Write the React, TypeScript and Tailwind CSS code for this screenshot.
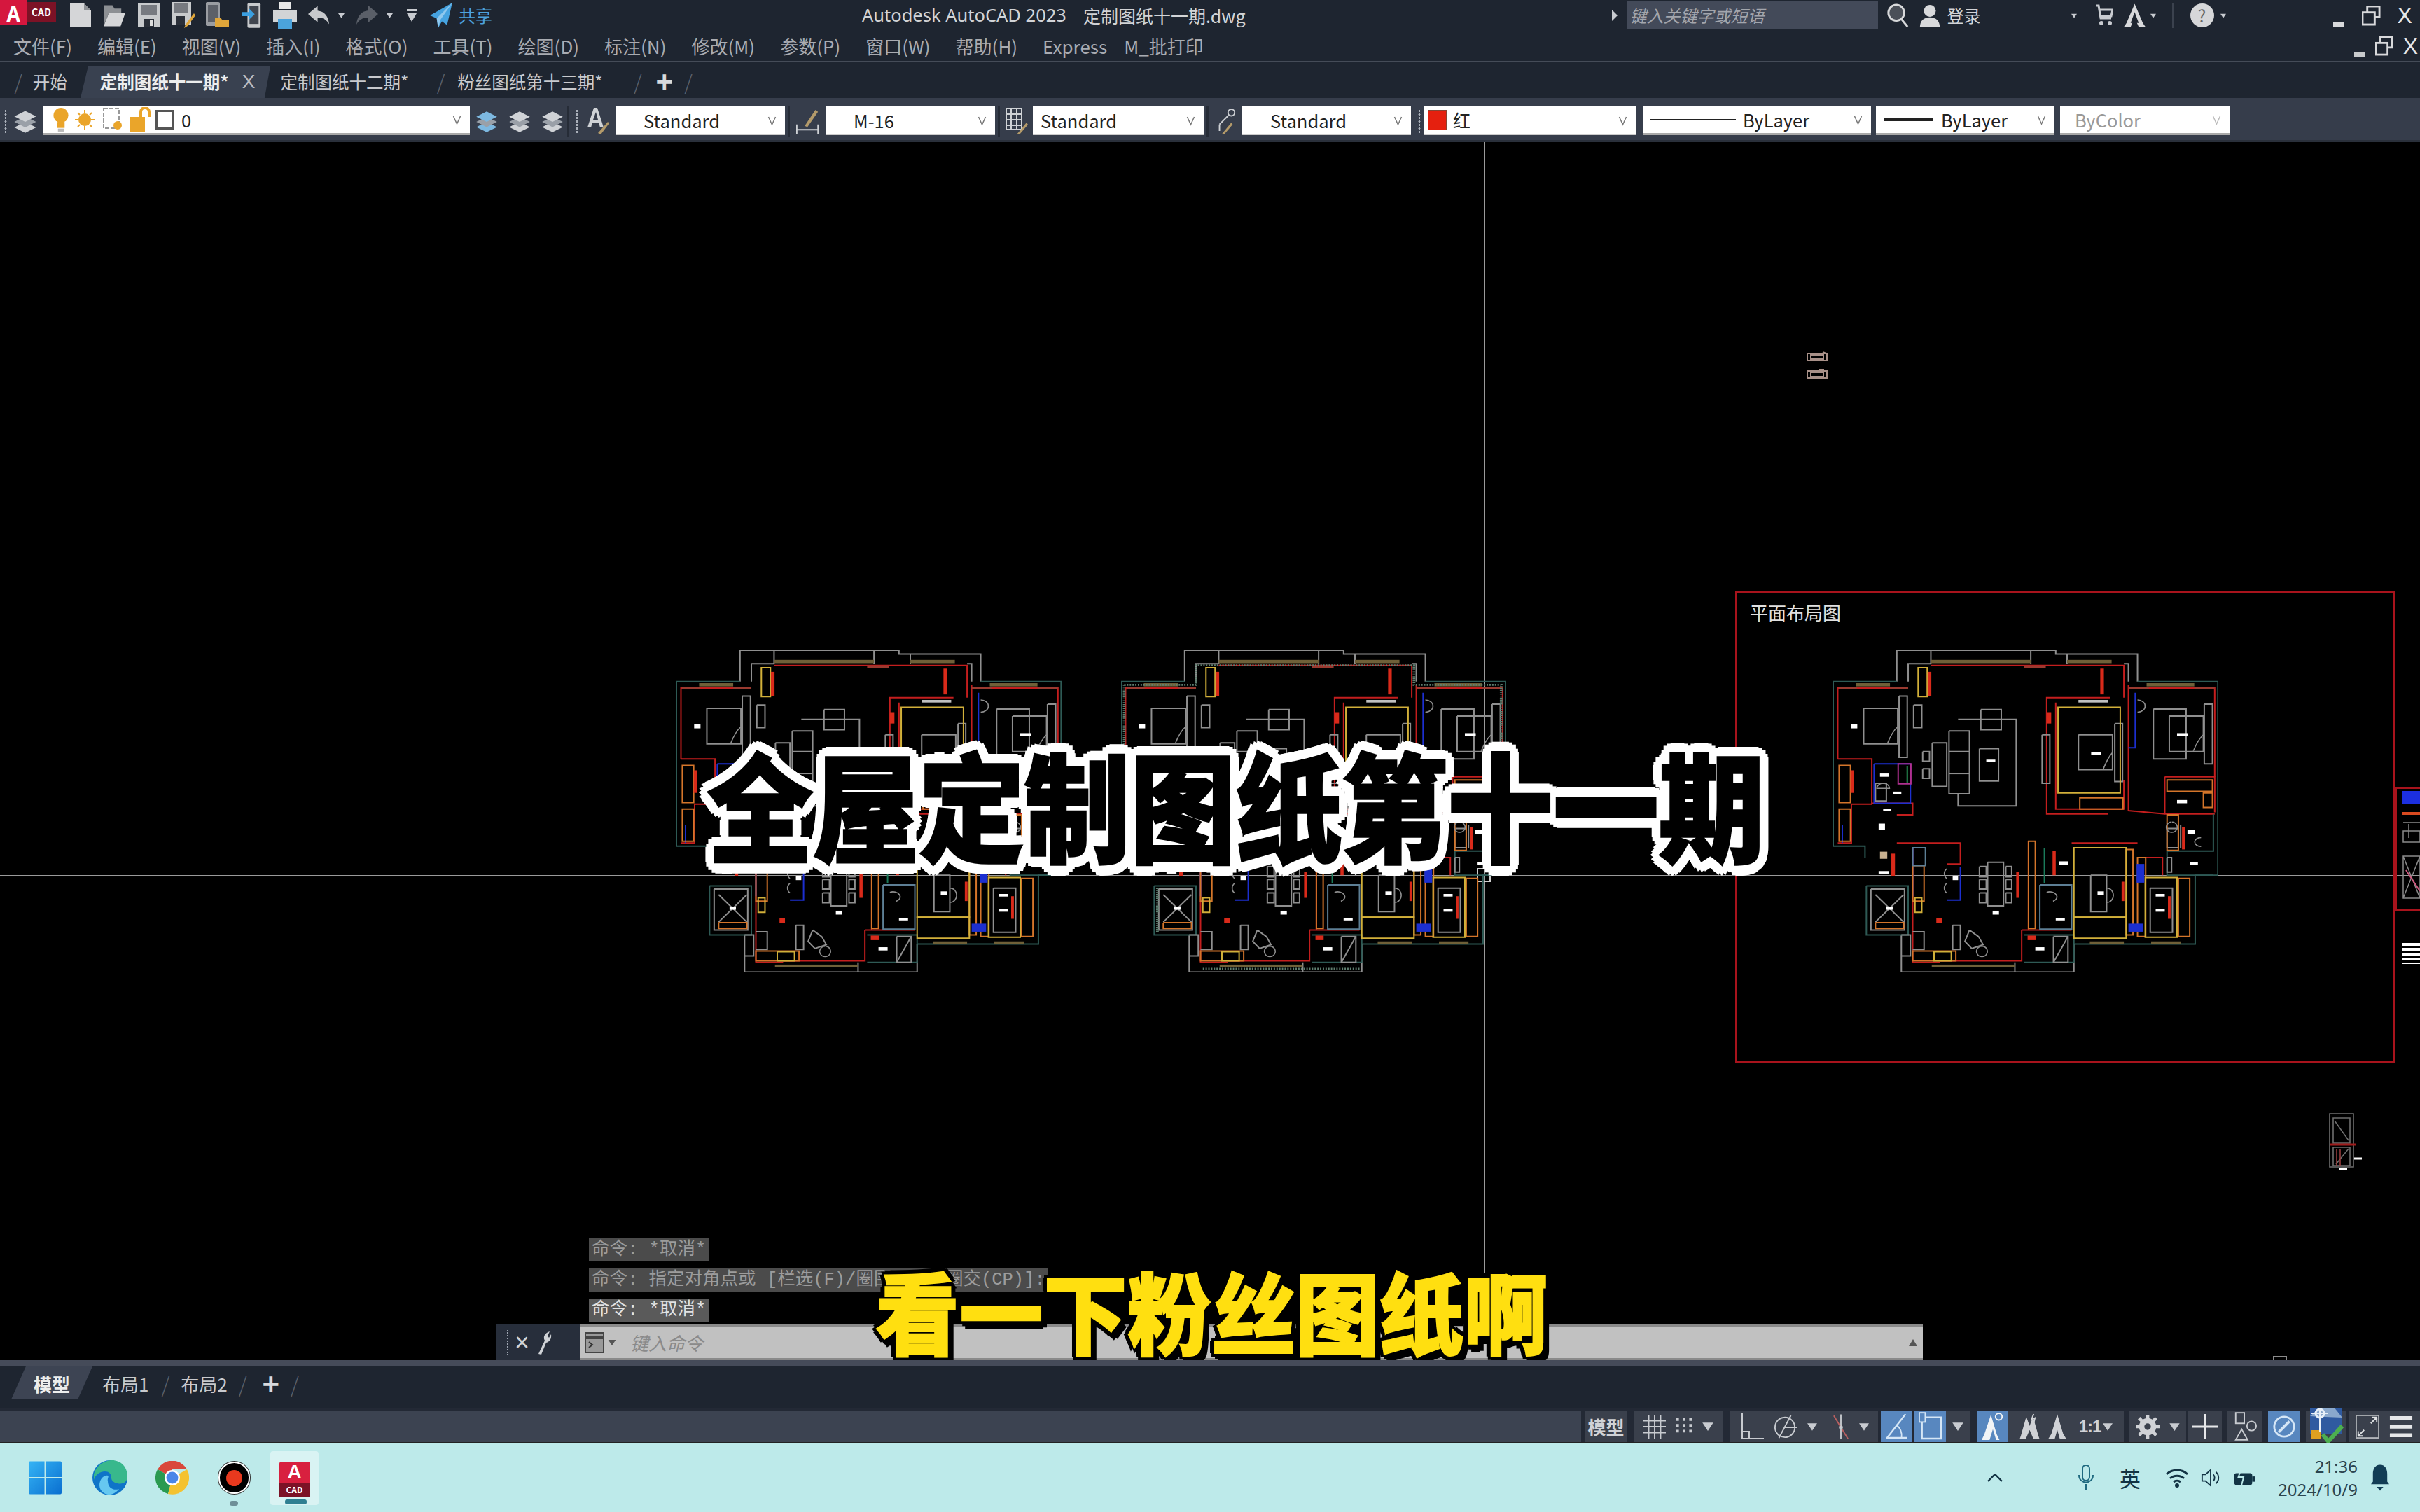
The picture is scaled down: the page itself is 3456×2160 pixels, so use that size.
import React from "react";

const G = "#8f8f8f", R = "#c41e1e", O = "#d4752a", Y = "#d2b03a", B = "#1c2fd0", T = "#2e5a55", L = "#5d7f95";

const lines: [string, string][] = [
  [G, "415,335 415,238 765,238 765,250 945,250 945,335"],
  [G, "440,335 440,280 490,280"], [G, "925,335 925,280 915,280"], [G, "710,238 710,280"], [G, "490,238 490,280"], [G, "790,250 790,280"],
  [T, "945,335 1122,335 1122,935 1072,935 1072,1148 805,1148"],
  [G, "805,1148 805,1235 425,1235 425,1120"], [G, "675,1205 675,1235"],
  [T, "415,335 275,335 275,845 345,845 345,880"],
  [T, "348,968 440,968 440,1120 348,1120 348,968"],
  [G, "358,978 432,978 432,1105 358,1105 358,978"],
  [G, "368,995 430,1080"], [G, "430,995 368,1080"], [O, "368,1082 430,1082 430,1100 368,1100 368,1082"],
  [R, "285,575 285,355 440,355"], [R, "925,355 1115,355 1115,630"], [R, "490,285 915,285 915,385"],
  [R, "510,1200 690,1200 690,1105"], [R, "450,850 450,1205 510,1205"], [R, "285,575 360,575 360,712 450,712 450,748 415,748"],
  [R, "885,385 745,385 745,745 880,745"], [R, "925,345 925,735 1005,745"], [R, "1005,630 1115,630 1115,740"],
  [R, "415,835 555,835 555,900 525,900"], [R, "705,830 705,1105"], [R, "800,835 945,835"], [R, "945,880 1000,880 1000,935"],
  [R, "765,400 765,730 915,730 915,640"], [R, "1005,630 1005,745 1115,745"], [R, "690,1105 800,1105"], [R, "285,835 315,835 315,715 360,715"],
  [T, "1112,745 1112,860 1010,860 1010,935 1112,935"], [T, "695,1120 805,1120 805,1205 695,1205"],
  [B, "940,370 940,540 925,540"], [B, "450,850 450,1000"], [B, "525,1012 555,1012 555,910"], [B, "295,780 295,835"], [B, "365,590 445,590 445,712 365,712 365,590"],
  [L, "730,965 800,965 800,1102 730,1102 730,965"],
  ["#1a7a5a", "740,850 740,960"], ["#2a9a5a", "438,598 438,650"],
  [G, "550,452 678,452 678,720 550,720 550,685"], [G, "600,422 645,422 645,484 600,484 600,422"], [G, "530,488 575,488 575,683 530,683 530,488"], [G, "530,552 575,552"], [G, "530,620 575,620"],
  [G, "597,543 639,543 639,643 597,643 597,543"], [G, "493,525 525,525 525,660 493,660 493,525"], [G, "472,552 487,552 487,582 472,582 472,552"], [G, "472,605 487,605 487,635 472,635 472,605"],
  [G, "342,418 417,418 417,528 342,528 342,418"], [G, "815,500 890,500 890,608 815,608 815,500"], [G, "1015,442 1090,442 1090,552 1015,552 1015,442"], [G, "980,420 1052,420 1052,575 980,575 980,420"],
  [G, "420,380 438,380 438,570 420,570 420,380"], [G, "895,465 912,465 912,645 895,645 895,465"], [G, "1092,405 1110,405 1110,590 1092,590 1092,405"], [G, "452,408 470,408 470,478 452,478 452,408"],
  [G, "735,500 752,500 752,650 735,650 735,500"], [G, "615,895 650,895 650,1030 615,1030 615,895"],
  [G, "597,908 612,908 612,940 597,940 597,908"], [G, "597,948 612,948 612,978 597,978 597,948"], [G, "597,990 612,990 612,1020 597,1020 597,990"],
  [G, "655,908 668,908 668,940 655,940 655,908"], [G, "655,948 668,948 668,978 655,978 655,948"], [G, "655,990 668,990 668,1020 655,1020 655,990"],
  [G, "842,935 877,935 877,1048 842,1048 842,935"], [G, "973,975 1022,975 1022,1112 973,1112 973,975"],
  [G, "575,1105 595,1125 605,1150 580,1162 565,1140 575,1105"], [G, "760,1125 792,1125 792,1205 760,1205 760,1125"], [G, "760,1205 792,1125"], [G, "538,1090 555,1090 555,1165 538,1165 538,1090"],
  [G, "1010,790 1035,790 1035,850 1010,850 1010,790"], [G, "1010,880 1020,880 1020,925 1010,925 1010,880"], [G, "368,650 392,650 392,705 368,705 368,650"],
  [G, "450,1110 475,1110 475,1165 450,1165"], [G, "425,1120 445,1120 445,1185 425,1185"], [G, "1040,780 1040,850"],
];
const rects: [string, number, number, number, number][] = [
  [O, 288, 595, 25, 115], [O, 288, 730, 25, 100], [O, 1010, 640, 100, 35], [O, 1090, 680, 20, 45], [O, 1010, 748, 25, 110], [O, 818, 695, 95, 35], [O, 705, 830, 15, 270], [O, 920, 855, 15, 265], [O, 945, 880, 18, 245], [O, 450, 1170, 95, 30], [O, 450, 905, 25, 110], [O, 1035, 945, 25, 180],
  [Y, 770, 415, 137, 265], [Y, 805, 850, 115, 215], [Y, 805, 1065, 115, 65], [Y, 962, 942, 70, 185], [Y, 497, 1172, 38, 28], [Y, 455, 1005, 15, 45], [Y, 462, 292, 20, 90],
  ["#b03090", 418, 590, 28, 62], [L, 450, 850, 28, 55],
];
const fills: [string, number, number, number, number][] = [
  ["#6f6038", 490, 268, 220, 10], ["#6f6038", 790, 268, 98, 10], ["#6f6038", 325, 340, 75, 10], ["#6f6038", 965, 340, 105, 10], ["#6f6038", 492, 1212, 183, 8], ["#6f6038", 840, 1140, 75, 8], ["#6f6038", 975, 1140, 65, 8], ["#9a3a30", 695, 285, 48, 8], ["#9a3a30", 400, 352, 40, 6], ["#9a3a30", 287, 352, 40, 6], ["#9a3a30", 1070, 352, 45, 6], ["#9a3a30", 925, 352, 45, 6],
  ["#d92a1a", 863, 295, 8, 80], ["#d92a1a", 483, 305, 8, 75], ["#d92a1a", 313, 610, 7, 70], ["#d92a1a", 403, 868, 8, 70], ["#d92a1a", 678, 925, 7, 80], ["#d92a1a", 758, 860, 7, 75], ["#d92a1a", 910, 955, 6, 60], ["#d92a1a", 1012, 1000, 6, 70], ["#d92a1a", 1043, 785, 6, 70], ["#d92a1a", 502, 1068, 12, 14], ["#d92a1a", 703, 1122, 18, 14], ["#d92a1a", 745, 430, 10, 35],
  [B, 943, 900, 17, 58], [B, 925, 1085, 32, 25], ["#c0c0c0", 815, 392, 65, 8], ["#c8b090", 378, 862, 16, 22],
  ["#fff", 314, 468, 14, 12], ["#fff", 1032, 495, 24, 8], ["#fff", 843, 554, 22, 8], ["#fff", 612, 577, 20, 8], ["#fff", 378, 620, 20, 10], ["#fff", 407, 676, 18, 8], ["#fff", 385, 730, 18, 6], ["#fff", 375, 775, 14, 20], ["#fff", 375, 922, 22, 8], ["#fff", 392, 1032, 14, 10], ["#fff", 538, 938, 12, 12], ["#fff", 626, 1045, 14, 12], ["#fff", 772, 892, 20, 12], ["#fff", 857, 985, 14, 12], ["#fff", 765, 1067, 20, 8], ["#fff", 985, 993, 20, 8], ["#fff", 985, 1040, 20, 8], ["#fff", 720, 1158, 20, 10], ["#fff", 1032, 702, 22, 10], ["#fff", 1055, 795, 16, 12], ["#fff", 1060, 894, 18, 8],
];
const arcs = [
  "M945 392a16 18 0 0 1 0 38", "M385 650a14 16 0 0 1 14 16h-28a14 16 0 0 1 14-16", "M1085 818a14 14 0 1 0 0 28", "M525 915a12 18 0 0 0 0 30", "M525 960a12 18 0 0 0 0 30", "M745 988a14 14 0 0 1 14 28", "M878 975a14 22 0 0 1 0 44", "M602 1155a12 16 0 1 0 1 0", "M395 525q10-35 22-50", "M870 605q10-35 20-50", "M1068 550q10-35 22-50", "M1020 770a12 16 0 1 0 1 0",
];

function Plan({ className, hatched }: { className: string; hatched?: boolean }) {
  return (
    <svg viewBox="275 238 848 998" preserveAspectRatio="none" className={className}>
      {lines.map(([c, p], i) => <polyline key={i} points={p} fill="none" stroke={c} strokeWidth={2} vectorEffect="non-scaling-stroke" />)}
      {rects.map(([c, x, y, w, h], i) => <rect key={i} x={x} y={y} width={w} height={h} fill="none" stroke={c} strokeWidth={2} vectorEffect="non-scaling-stroke" />)}
      {arcs.map((d, i) => <path key={i} d={d} fill="none" stroke={G} strokeWidth={1.6} vectorEffect="non-scaling-stroke" />)}
      {fills.map(([c, x, y, w, h], i) => <rect key={i} x={x} y={y} width={w} height={h} fill={c} />)}
      {hatched && (
        <g fill="none" stroke="#5f7f70" strokeWidth={6} strokeDasharray="3 3" vectorEffect="non-scaling-stroke">
          <polyline points="282,345 440,345 440,285 920,285 920,345 1112,345 1112,925" />
          <polyline points="282,345 282,830" /><polyline points="355,975 355,1110" /><polyline points="455,1225 800,1225" />
        </g>
      )}
    </svg>
  );
}

const Chev = ({ c = "#777" }: { c?: string }) => (
  <svg viewBox="0 0 12 16" className="w-[13px] h-[16px] shrink-0"><path d="M1 3l5 11 5-11" fill="none" stroke={c} strokeWidth={1.5} /></svg>
);
const Tri = ({ className = "w-[12px] h-[10px]", c = "#c8cbd0" }: { className?: string; c?: string }) => (
  <svg viewBox="0 0 12 10" className={className}><path d="M0 1h12L6 10z" fill={c} /></svg>
);
const Grip = () => (
  <div className="w-[7px] h-[34px] shrink-0 [background-image:radial-gradient(#aab0ba_1.4px,transparent_1.6px)] [background-size:6px_5px]" />
);

function Stack({ c = "#cfd2d6" }: { c?: string }) {
  return (
    <svg viewBox="0 0 32 36" className="w-full h-full">
      <path d="M2 26l14-7 14 7-14 7z" fill={c} /><path d="M2 19l14-7 14 7-14 7z" fill="#9aa0a8" /><path d="M2 12l14-7 14 7-14 7z" fill={c} />
    </svg>
  );
}

function StatusDiv({ className, children }: { className: string; children?: React.ReactNode }) {
  return <div className={"h-full flex items-center justify-center shrink-0 " + className}>{children}</div>;
}

export default function App() {
  return (
    <div className="w-[3456px] h-[2160px] flex flex-col overflow-hidden bg-black font-['Noto_Sans_CJK_SC','Noto_Sans',sans-serif] text-[#c4c6ca]">
      {/* title bar */}
      <div className="h-[44px] shrink-0 bg-[#1e2530] flex items-center">
        <div className="w-[38px] h-[36px] self-start bg-[#d5173e] flex items-center justify-center text-white font-bold text-[30px] leading-none">A</div>
        <div className="w-[42px] h-[28px] self-start mt-[3px] bg-[#7c1226] flex items-center justify-center text-white font-bold text-[14px] leading-none">CAD</div>
        <svg viewBox="0 0 32 34" className="ml-[19px] w-[32px] h-[34px]"><path d="M1 0h20l10 10v24H1z" fill="#d5d6d8" /><path d="M21 0v10h10z" fill="#8f9296" /></svg>
        <svg viewBox="0 0 34 34" className="ml-[16px] w-[33px] h-[34px]"><path d="M2 2h12l3 5h10v6H9L2 30z" fill="#8d9094" /><path d="M9 13h24l-7 20H1z" fill="#d5d6d8" /></svg>
        <svg viewBox="0 0 32 34" className="ml-[17px] w-[32px] h-[34px]"><path d="M0 0h32v34H0z" fill="#c8cacc" /><path d="M5 2h22v15H5z" fill="#777a80" /><path d="M9 22h14v12H9z" fill="#2a2f38" /><path d="M17 24h4v8h-4z" fill="#ddd" /></svg>
        <svg viewBox="0 0 34 38" className="ml-[16px] w-[34px] h-[38px]"><path d="M0 0h28v32H0z" fill="#c8cacc" /><path d="M4 2h20v13H4z" fill="#777a80" /><path d="M7 20h12v12H7z" fill="#2a2f38" /><path d="M20 32l12-16 2 3-11 15-5 3z" fill="#e0a63a" /></svg>
        <svg viewBox="0 0 34 38" className="ml-[15px] w-[34px] h-[38px]"><rect x="0" y="0" width="20" height="34" rx="2" fill="#9a9da2" /><rect x="3" y="4" width="14" height="24" fill="#5c6068" /><path d="M13 22h8l2 3h10v11H13z" fill="#e0a63a" /></svg>
        <svg viewBox="0 0 30 38" className="ml-[18px] w-[28px] h-[38px]"><rect x="8" y="0" width="20" height="38" rx="2" fill="#c8cacc" /><rect x="11" y="4" width="14" height="28" fill="#41464f" /><path d="M0 14h10V8l9 9-9 9v-6H0z" fill="#3b9fe0" /></svg>
        <svg viewBox="0 0 34 38" className="ml-[16px] w-[34px] h-[38px]"><path d="M8 0h18v10H8z" fill="#e8e8e8" /><path d="M0 12h34v16H0z" fill="#d2d4d6" /><path d="M7 24h20v14H7z" fill="#4ba3dc" /></svg>
        <svg viewBox="0 0 32 28" className="ml-[16px] w-[31px] h-[28px]"><path d="M14 0L0 12l14 12v-7c8 0 13 3 17 10C30 15 24 8 14 7z" fill="#c7c9cc" /></svg>
        <Tri className="ml-[12px] w-[9px] h-[8px]" />
        <svg viewBox="0 0 32 28" className="ml-[16px] w-[32px] h-[28px]"><path d="M18 0l14 12-14 12v-7C10 17 5 20 1 27 2 15 8 8 18 7z" fill="#5a5f68" /></svg>
        <Tri className="ml-[12px] w-[9px] h-[8px]" />
        <svg viewBox="0 0 14 18" className="ml-[20px] w-[14px] h-[18px]"><path d="M0 0h14v3H0zM0 6h14L7 18z" fill="#c8cbd0" /></svg>
        <svg viewBox="0 0 30 34" className="ml-[19px] w-[32px] h-[36px]"><path d="M30 0L0 17l9 4 2 13 5-9 7 5z" fill="#46a3e0" /><path d="M30 0L9 21l2 13 3-11z" fill="#8fc8ee" /></svg>
        <span className="ml-[9px] w-[576px] text-[24px] leading-none text-[#4ea2dc] whitespace-nowrap">共享</span>
        <span className="text-[25.5px] leading-none text-[#d2d4d7] whitespace-nowrap font-['Noto_Sans','Noto_Sans_CJK_SC',sans-serif]">Autodesk AutoCAD 2023</span>
        <span className="ml-[24px] text-[25px] leading-none text-[#d2d4d7] whitespace-nowrap">定制图纸十一期.dwg</span>
        <svg viewBox="0 0 8 16" className="ml-[523px] w-[8px] h-[16px]"><path d="M0 0l8 8-8 8z" fill="#c8cbd0" /></svg>
        <div className="ml-[13px] w-[359px] h-[40px] bg-[#434a59] flex items-center pl-[5px] italic text-[24px] leading-none text-[#a3a6ad]">键入关键字或短语</div>
        <svg viewBox="0 0 32 36" className="ml-[12px] w-[32px] h-[34px]"><circle cx="14" cy="14" r="12" fill="#4a4f58" stroke="#d8d9db" strokeWidth="3" /><path d="M22 24l9 11" stroke="#d8d9db" strokeWidth="3" /></svg>
        <svg viewBox="0 0 32 36" className="ml-[14px] w-[32px] h-[34px]"><circle cx="16" cy="11" r="9" fill="#d8d9db" /><path d="M1 36c0-10 6-15 15-15s15 5 15 15z" fill="#d8d9db" /></svg>
        <span className="ml-[9px] text-[24px] leading-none text-[#d2d4d7]">登录</span>
        <Tri className="ml-[129px] w-[8px] h-[7px]" />
        <svg viewBox="0 0 26 32" className="ml-[26px] w-[26px] h-[32px]"><path d="M1 2h4l3 18h15M6 8h19l-2 9H8" fill="none" stroke="#c8cbd0" strokeWidth="3" /><circle cx="9" cy="27" r="3" fill="#c8cbd0" /><circle cx="21" cy="27" r="3" fill="#c8cbd0" /></svg>
        <svg viewBox="0 0 32 34" className="ml-[15px] w-[31px] h-[34px]"><path d="M16 0L4 28l-4 6h10l6-14 6 14h10l-4-6z" fill="#d8d9db" /><path d="M16 12l-6 16h12z" fill="#1e2530" /></svg>
        <Tri className="ml-[7px] w-[8px] h-[7px]" />
        <div className="ml-[23px] w-[2px] h-[36px] bg-[#3b424e]" />
        <div className="ml-[24px] w-[34px] h-[34px] rounded-full bg-[#d6d7d9] flex items-center justify-center text-[#666] text-[24px] leading-none">?</div>
        <Tri className="ml-[9px] w-[8px] h-[7px]" />
        <div className="ml-[153px] w-[16px] h-[7px] self-end mb-[6px] bg-[#d8d9db]" />
        <svg viewBox="0 0 28 30" className="ml-[25px] w-[27px] h-[29px]"><rect x="8" y="1" width="18" height="16" fill="none" stroke="#d8d9db" strokeWidth="3" /><rect x="1" y="10" width="18" height="18" fill="#1e2530" stroke="#d8d9db" strokeWidth="3" /></svg>
        <span className="ml-[24px] text-[32px] leading-none font-['Liberation_Sans',sans-serif] text-[#e6e7e9]">X</span>
      </div>
      {/* menu */}
      <div className="h-[43px] shrink-0 bg-[#1e2530] flex items-center pl-[19px] gap-[36px] text-[26px] leading-none text-[#a9acb2] whitespace-nowrap relative">
        <span>文件(F)</span><span>编辑(E)</span><span>视图(V)</span><span>插入(I)</span><span>格式(O)</span><span>工具(T)</span><span>绘图(D)</span><span>标注(N)</span><span>修改(M)</span><span>参数(P)</span><span>窗口(W)</span><span>帮助(H)</span><span>Express</span><span className="-ml-[12px]">M_批打印</span>
        <div className="ml-auto flex items-center gap-[14px] pr-[3px]">
          <div className="w-[16px] h-[7px] self-end mt-[18px] bg-[#c8cacc]" />
          <svg viewBox="0 0 28 30" className="w-[26px] h-[28px]"><rect x="8" y="1" width="18" height="16" fill="none" stroke="#d8d9db" strokeWidth="3" /><rect x="1" y="10" width="18" height="18" fill="#1e2530" stroke="#d8d9db" strokeWidth="3" /></svg>
          <span className="text-[32px] leading-none font-['Liberation_Sans',sans-serif] text-[#e6e7e9]">X</span>
        </div>
      </div>
      <div className="h-[2px] shrink-0 bg-[#454c58]" />
      {/* drawing tabs */}
      <div className="h-[51px] shrink-0 bg-[#1e2530] flex items-center text-[24.5px] leading-none whitespace-nowrap relative pt-[5px]">
        <div className="absolute left-[115px] top-[6px] w-[271px] h-[45px] bg-[#394150] [clip-path:polygon(4%_0,100%_0,97%_100%,0_100%)]" />
        <span className="ml-[20px] text-[#5c626d] text-[30px] font-light">/</span>
        <span className="ml-[15px] text-[#c8cace] relative">开始</span>
        <span className="ml-[47px] relative font-bold text-[#eceded]">定制图纸十一期*</span>
        <span className="ml-[19px] relative text-[#b9bcc2] text-[28px] font-['Liberation_Sans',sans-serif]">X</span>
        <span className="ml-[36px] relative text-[#c8cace]">定制图纸十二期*</span>
        <span className="ml-[40px] text-[#5c626d] text-[30px] font-light">/</span>
        <span className="ml-[18px] text-[#c8cace]">粉丝图纸第十三期*</span>
        <span className="ml-[44px] text-[#5c626d] text-[30px] font-light">/</span>
        <span className="ml-[20px] text-[#d8dadd] text-[42px] font-bold font-['Liberation_Sans',sans-serif]">+</span>
        <span className="ml-[16px] text-[#5c626d] text-[30px] font-light">/</span>
      </div>
      {/* toolbar */}
      <div className="h-[63px] shrink-0 bg-[#363d4b] flex items-center pl-[5px] pt-[5px] text-[25.5px] leading-none text-[#222] whitespace-nowrap border-b-[3px] border-[#2a303b]">
        <Grip />
        <div className="ml-[6px] w-[36px] h-[40px]"><Stack /></div>
        <div className="ml-[8px] w-[609px] h-[41px] bg-white flex items-center pr-[12px] border-b-[3px] border-[#aaa]">
          <svg viewBox="0 0 20 34" className="ml-[14px] w-[22px] h-[36px]"><circle cx="10" cy="11" r="10" fill="#eaa52a" /><path d="M5 20h10v8H5z" fill="#eaa52a" /><path d="M6 29h8v4H6z" fill="#bbb" /></svg>
          <svg viewBox="0 0 28 28" className="ml-[9px] w-[28px] h-[28px]"><circle cx="14" cy="14" r="9" fill="#eaa52a" /><path d="M14 0v5M14 23v5M0 14h5M23 14h5M4 4l3 3M21 21l3 3M4 24l3-3M21 7l3-3" stroke="#eaa52a" strokeWidth="2" /></svg>
          <svg viewBox="0 0 30 36" className="ml-[11px] w-[30px] h-[36px]"><rect x="2" y="2" width="22" height="28" fill="none" stroke="#999" strokeWidth="2" strokeDasharray="6 2" /><circle cx="22" cy="26" r="6" fill="#eaa52a" /></svg>
          <svg viewBox="0 0 30 36" className="ml-[9px] w-[30px] h-[36px]"><rect x="0" y="14" width="22" height="22" fill="#eaa52a" /><path d="M16 14V7a6 6 0 0 1 12 0v7" fill="none" stroke="#eaa52a" strokeWidth="4" /></svg>
          <div className="ml-[7px] w-[26px] h-[28px] bg-white border-[3px] border-[#555]" />
          <span className="ml-[11px]">0</span>
          <span className="ml-auto"><Chev /></span>
        </div>
        <div className="ml-[7px] w-[34px] h-[38px]"><Stack c="#7db8e0" /></div>
        <div className="ml-[13px] w-[34px] h-[38px]"><Stack /></div>
        <div className="ml-[13px] w-[34px] h-[38px]"><Stack /></div>
        <div className="ml-[4px] w-[3px] h-[44px] bg-[#262c37]" />
        <div className="ml-[8px]"><Grip /></div>
        <svg viewBox="0 0 34 38" className="ml-[8px] w-[34px] h-[38px]"><path d="M12 0h5l9 28h-5l-2-7H10l-2 7H3zM11 17h7l-3-11z" fill="#cfd2d6" /><path d="M18 36l14-16 2 2-12 16z" fill="#b39a6a" /></svg>
        <div className="ml-[9px] w-[242px] h-[41px] bg-white flex items-center justify-between pl-[40px] pr-[12px] border-b-[2px] border-[#ccc]"><span>Standard</span><Chev /></div>
        <div className="ml-[4px] w-[3px] h-[44px] bg-[#262c37]" />
        <svg viewBox="0 0 34 38" className="ml-[9px] w-[34px] h-[36px]"><path d="M0 24v14M32 24v14M0 32h32" stroke="#cfd2d6" strokeWidth="2" fill="none" /><path d="M12 26L28 2l4 3-16 23z" fill="#b39a6a" /></svg>
        <div className="ml-[8px] w-[242px] h-[41px] bg-white flex items-center justify-between pl-[40px] pr-[12px] border-b-[2px] border-[#ccc]"><span>M-16</span><Chev /></div>
        <div className="ml-[4px] w-[3px] h-[44px] bg-[#262c37]" />
        <svg viewBox="0 0 32 38" className="ml-[8px] w-[32px] h-[38px]"><path d="M1 1h22v30H1zM1 9h22M1 17h22M1 25h22M8 1v30M16 1v30" fill="none" stroke="#cfd2d6" strokeWidth="2" /><path d="M16 38l14-17 2 3-12 14z" fill="#b39a6a" /></svg>
        <div className="ml-[7px] w-[244px] h-[41px] bg-white flex items-center justify-between pl-[11px] pr-[12px] border-b-[2px] border-[#ccc]"><span>Standard</span><Chev /></div>
        <div className="ml-[4px] w-[3px] h-[44px] bg-[#262c37]" />
        <svg viewBox="0 0 34 38" className="ml-[8px] w-[32px] h-[38px]"><circle cx="26" cy="6" r="5" fill="none" stroke="#cfd2d6" strokeWidth="2" /><path d="M22 10L8 24M8 24v10" fill="none" stroke="#cfd2d6" strokeWidth="2" /><path d="M12 38l14-17 2 3-12 14z" fill="#b39a6a" /></svg>
        <div className="ml-[8px] w-[241px] h-[41px] bg-white flex items-center justify-between pl-[40px] pr-[12px] border-b-[2px] border-[#ccc]"><span>Standard</span><Chev /></div>
        <div className="ml-[9px]"><Grip /></div>
        <div className="ml-[3px] w-[302px] h-[41px] bg-white flex items-center pl-[5px] pr-[12px] border-b-[2px] border-[#ccc]">
          <div className="w-[27px] h-[29px] bg-[#e5200f] border border-[#884433]" /><span className="ml-[9px] text-[25px]">红</span><span className="ml-auto"><Chev /></span>
        </div>
        <div className="ml-[10px] w-[326px] h-[41px] bg-white flex items-center pl-[11px] pr-[12px] border-b-[3px] border-[#aaa]">
          <div className="w-[122px] h-[2px] bg-[#222]" /><span className="ml-[10px]">ByLayer</span><span className="ml-auto"><Chev /></span>
        </div>
        <div className="ml-[7px] w-[255px] h-[41px] bg-white flex items-center pl-[11px] pr-[12px] border-b-[3px] border-[#aaa]">
          <div className="w-[70px] h-[4px] bg-[#222]" /><span className="ml-[12px]">ByLayer</span><span className="ml-auto"><Chev /></span>
        </div>
        <div className="ml-[8px] w-[242px] h-[41px] bg-white flex items-center pl-[21px] pr-[12px] text-[#999] border-b-[3px] border-[#aaa]">
          <span>ByColor</span><span className="ml-auto"><Chev c="#bbb" /></span>
        </div>
      </div>
      {/* canvas */}
      <div className="flex-1 min-h-0 relative bg-black overflow-hidden">
        <div className="absolute left-[2119px] top-0 bottom-0 w-[2px] bg-[#9a9a9a]" />
        <div className="absolute left-0 right-0 top-[1047px] h-[2px] bg-[#9a9a9a]" />
        <div className="absolute left-[2109px] top-[1037px] w-[20px] h-[20px] border-[2px] border-[#cfcfcf]" />
        <Plan className="absolute left-[966px] top-[726px] w-[550px] h-[460px]" />
        <Plan hatched className="absolute left-[1601px] top-[726px] w-[550px] h-[460px]" />
        <Plan className="absolute left-[2618px] top-[726px] w-[550px] h-[460px]" />
        <div className="absolute left-[2478px] top-[641px] w-[943px] h-[675px] border-[3px] border-[#a8131c]" />
        <span className="absolute left-[2499px] top-[654px] text-[26px] leading-[36px] text-[#e0e0e0]">平面布局图</span>
        {/* right hand sheet block */}
        <div className="absolute left-[3420px] top-[921px] w-[40px] h-[178px] border-[3px] border-[#a8131c]" />
        <div className="absolute left-[3430px] top-[927px] w-[26px] h-[18px] bg-[#1c2fe0]" />
        <div className="absolute left-[3430px] top-[957px] w-[26px] h-[4px] bg-[#d94a20]" />
        <svg viewBox="0 0 26 120" className="absolute left-[3430px] top-[970px] w-[26px] h-[120px]"><path d="M2 2h24M2 30h24V14H2zM2 50h24v60H2zM2 50l24 60M26 50L2 110M10 24v-20" fill="none" stroke="#8a8a8a" strokeWidth="1.5" /><path d="M6 70l20 30" stroke="#d05a80" strokeWidth="2" /></svg>
        <div className="absolute left-[3430px] top-[1144px] w-[26px] h-[30px] bg-[repeating-linear-gradient(#fff_0,#fff_4px,#000_4px,#000_7px)]" />
        {/* stray blocks */}
        <svg viewBox="0 0 32 40" className="absolute left-[2579px] top-[298px] w-[32px] h-[42px]"><path d="M2 3h28v10H2zM7 5h18v6H7zM24 1l5 2M2 28h28v10H2zM7 30h18v6H7zM18 26h8" fill="none" stroke="#a89088" strokeWidth="2" /></svg>
        <svg viewBox="0 0 60 85" className="absolute left-[3320px] top-[1386px] w-[60px] h-[85px]"><path d="M7 2h34v76H7zM12 8h24v36H12zM14 12l20 28M12 50h24v26H12zM34 52L16 74" fill="none" stroke="#6f6f6f" strokeWidth="1.6" /><path d="M8 46h36" stroke="#a01c1c" strokeWidth="3" /><path d="M17 52v24M22 52v24" stroke="#a04040" strokeWidth="1.5" /><path d="M42 66h11" stroke="#fff" strokeWidth="3" /><path d="M20 81h12" stroke="#fff" strokeWidth="3" /></svg>
        <div className="absolute left-[3246px] top-[1734px] w-[20px] h-[6px] border-t-[2px] border-x-[2px] border-[#8a8a8a]" />
        {/* command history */}
        <div className="absolute left-[841px] top-[1566px] flex flex-col gap-[10px] font-['Liberation_Mono','Noto_Sans_CJK_SC',monospace] text-[25.5px] leading-[33px] items-start whitespace-nowrap">
          <div className="bg-[#4b4b4b] text-[#9c9c9c] px-[4px] h-[33px]">命令: *取消*</div>
          <div className="bg-[#4b4b4b] text-[#9c9c9c] px-[4px] h-[33px]">命令: 指定对角点或 [栏选(F)/圈围(WP)/圈交(CP)]:</div>
          <div className="bg-[#5a5a5a] text-[#e2e2e2] px-[4px] h-[33px]">命令: *取消*</div>
        </div>
        {/* command line */}
        <div className="absolute left-[709px] top-[1689px] w-[2037px] h-[51px] flex items-stretch">
          <div className="w-[119px] bg-[#272e3b] flex items-center pl-[15px]">
            <div className="w-[2px] h-[36px] border-l-[2px] border-dotted border-[#9ca3af]" />
            <span className="ml-[9px] text-[36px] leading-none text-[#cfd2d6] font-['Liberation_Sans',sans-serif]">×</span>
            <svg viewBox="0 0 20 34" className="ml-[10px] w-[22px] h-[34px]"><path d="M2 33l9-19c-3-5 0-11 7-13l-3 6 2 3 3-5c1 6-2 11-7 12L6 34z" fill="#cfd2d6" /></svg>
          </div>
          <div className="flex-1 bg-[#c1c1c1] border-y-[3px] border-t-[#8a8a8a] border-b-[#8a8a8a] flex items-center pr-[8px]">
            <svg viewBox="0 0 28 30" className="ml-[7px] w-[28px] h-[30px]"><rect x="1" y="1" width="26" height="28" fill="#999" stroke="#444" strokeWidth="2" /><path d="M1 8h26" stroke="#444" strokeWidth="4" /><path d="M6 14l5 4-5 4" fill="none" stroke="#333" strokeWidth="2" /></svg>
            <Tri className="ml-[5px] w-[12px] h-[9px]" c="#555" />
            <span className="ml-[20px] italic text-[26px] leading-none text-[#8a8a8a]">键入命令</span>
            <svg viewBox="0 0 12 10" className="ml-auto w-[12px] h-[10px]"><path d="M0 10h12L6 0z" fill="#555" /></svg>
          </div>
        </div>
        {/* caption overlays */}
        <div className="absolute left-[1000px] top-[848px] w-[1530px] text-center text-[151px] leading-[190px] font-black text-black whitespace-nowrap scale-y-[1.11] [-webkit-text-stroke:3px_#000] [text-shadow:14px_0_0_#fff,13px_5px_0_#fff,10px_10px_0_#fff,5px_13px_0_#fff,0_14px_0_#fff,-5px_13px_0_#fff,-10px_10px_0_#fff,-13px_5px_0_#fff,-14px_0_0_#fff,-13px_-5px_0_#fff,-10px_-10px_0_#fff,-5px_-13px_0_#fff,0_-14px_0_#fff,5px_-13px_0_#fff,10px_-10px_0_#fff,13px_-5px_0_#fff,7px_0_0_#fff,-7px_0_0_#fff,0_7px_0_#fff,0_-7px_0_#fff]">全屋定制图纸第十一期</div>
        <div className="absolute left-[1249px] top-[1598px] w-[962px] text-center text-[120px] leading-[140px] font-black text-[#ffdf10] whitespace-nowrap scale-y-[1.06] [-webkit-text-stroke:2px_#ffdf10] [text-shadow:7px_0_0_#000,5px_5px_0_#000,0_7px_0_#000,-5px_5px_0_#000,-7px_0_0_#000,-5px_-5px_0_#000,0_-7px_0_#000,5px_-5px_0_#000,7px_7px_0_#000,4px_11px_0_#000,9px_9px_0_#000]">看一下粉丝图纸啊</div>
      </div>
      {/* layout tabs */}
      <div className="h-[9px] shrink-0 bg-[#454b59]" />
      <div className="h-[60px] shrink-0 bg-[#1e2530] flex items-center text-[26px] leading-none relative whitespace-nowrap pb-[10px]">
        <div className="absolute left-[16px] top-0 w-[116px] h-[47px] bg-[#3d4453] [clip-path:polygon(18%_0,100%_0,82%_100%,0_100%)]" />
        <span className="ml-[48px] relative font-bold text-[#eceded]">模型</span>
        <span className="ml-[46px] text-[#c8cace]">布局1</span>
        <span className="ml-[18px] text-[#5c626d] text-[30px] font-light">/</span>
        <span className="ml-[16px] text-[#c8cace]">布局2</span>
        <span className="ml-[16px] text-[#5c626d] text-[30px] font-light">/</span>
        <span className="ml-[22px] text-[#d8dadd] text-[42px] font-bold font-['Liberation_Sans',sans-serif]">+</span>
        <span className="ml-[16px] text-[#5c626d] text-[30px] font-light">/</span>
      </div>
      {/* status bar */}
      <div className="h-[50px] shrink-0 bg-[#232935] flex items-stretch pt-[3px] text-[#d0d2d6] border-b-[2px] border-[#222]">
        <div className="w-[2258px] shrink-0 bg-[#3c4351]" />
        <StatusDiv className="ml-[5px] w-[61px] bg-[#3a404c] text-[26px] leading-none font-bold">模型</StatusDiv>
        <StatusDiv className="ml-[9px] w-[128px] bg-[#3a404c] gap-[14px]">
          <svg viewBox="0 0 34 36" className="w-[32px] h-[36px]"><path d="M8 0v36M17 0v36M26 0v36M0 9h34M0 18h34M0 27h34" stroke="#c8cbd0" strokeWidth="2" /></svg>
          <svg viewBox="0 0 26 30" className="w-[24px] h-[28px]"><path d="M3 2v26M13 2v26M23 2v26" stroke="#c8cbd0" strokeWidth="4" strokeDasharray="4 5" /></svg>
          <Tri className="w-[16px] h-[13px]" />
        </StatusDiv>
        <StatusDiv className="ml-[10px] w-[211px] bg-[#3a404c] gap-[14px]">
          <svg viewBox="0 0 34 38" className="w-[34px] h-[38px]"><path d="M3 0v36h31M3 26h10v10" fill="none" stroke="#c8cbd0" strokeWidth="2" /></svg>
          <svg viewBox="0 0 36 38" className="w-[34px] h-[38px]"><circle cx="17" cy="20" r="15" fill="none" stroke="#c8cbd0" strokeWidth="2" /><path d="M8 36L26 2M17 20h19" stroke="#c8cbd0" strokeWidth="2" /></svg>
          <Tri className="w-[14px] h-[12px]" />
          <svg viewBox="0 0 26 38" className="ml-[8px] w-[24px] h-[38px]"><path d="M13 0v38" stroke="#c8cbd0" strokeWidth="2" /><path d="M2 2l22 36" stroke="#b96060" strokeWidth="2" /><circle cx="13" cy="20" r="3" fill="#c8cbd0" /></svg>
          <Tri className="w-[14px] h-[12px]" />
        </StatusDiv>
        <StatusDiv className="ml-[4px] w-[45px] bg-[#5887bf]">
          <svg viewBox="0 0 34 38" className="w-[32px] h-[36px]"><path d="M30 0L2 36h30" fill="none" stroke="#d5e6f6" strokeWidth="2.5" /><path d="M16 16a22 22 0 0 1 8 20" fill="none" stroke="#d5e6f6" strokeWidth="2" /></svg>
        </StatusDiv>
        <StatusDiv className="ml-[3px] w-[45px] bg-[#5887bf]">
          <svg viewBox="0 0 36 44" className="w-[34px] h-[42px]"><rect x="1" y="1" width="9" height="14" fill="none" stroke="#d5e6f6" strokeWidth="2" /><path d="M10 8h24v32H5V15" fill="none" stroke="#d5e6f6" strokeWidth="2.5" /></svg>
        </StatusDiv>
        <StatusDiv className="w-[34px] bg-[#3a404c]"><Tri className="w-[16px] h-[13px]" /></StatusDiv>
        <StatusDiv className="ml-[10px] w-[45px] bg-[#5887bf]">
          <svg viewBox="0 0 36 44" className="w-[34px] h-[42px]"><path d="M15 4L5 34l-4 8h12l5-16 5 16h5l-4-8z" fill="#f2f4f6" /><circle cx="27" cy="7" r="5" fill="none" stroke="#f2f4f6" strokeWidth="2" /></svg>
        </StatusDiv>
        <StatusDiv className="w-[165px] bg-[#3a404c] gap-[11px]">
          <svg viewBox="0 0 30 42" className="w-[29px] h-[40px]"><path d="M10 6l-8 28-2 6h9l6-14 6 14h9l-2-6-8-28-5 14z" fill="#d0d2d6" /><path d="M21 2l-3 8 5-2-2 8" fill="none" stroke="#d0d2d6" strokeWidth="2" /></svg>
          <svg viewBox="0 0 30 42" className="w-[28px] h-[40px]"><path d="M15 2L6 32l-5 8h10l4-14 4 14h10l-5-8z" fill="#d0d2d6" /></svg>
          <span className="ml-[6px] text-[24px] leading-none font-bold font-['Liberation_Sans',sans-serif] tracking-[-1px]">1:1</span>
          <Tri className="-ml-[8px] w-[14px] h-[12px]" />
        </StatusDiv>
        <StatusDiv className="ml-[8px] w-[81px] bg-[#3a404c] gap-[14px]">
          <svg viewBox="0 0 36 36" className="w-[34px] h-[36px]"><circle cx="18" cy="18" r="9" fill="none" stroke="#d0d2d6" strokeWidth="8" /><path d="M18 0v8M18 28v8M0 18h8M28 18h8M5 5l6 6M25 25l6 6M5 31l6-6M25 11l6-6" stroke="#d0d2d6" strokeWidth="5" /></svg>
          <Tri className="w-[15px] h-[12px]" />
        </StatusDiv>
        <StatusDiv className="ml-[3px] w-[48px] bg-[#3a404c]">
          <svg viewBox="0 0 36 36" className="w-[36px] h-[36px]"><path d="M18 0v36M0 18h36" stroke="#e6e7e9" strokeWidth="3" /></svg>
        </StatusDiv>
        <StatusDiv className="ml-[8px] w-[50px] bg-[#3a404c]">
          <svg viewBox="0 0 36 44" className="w-[34px] h-[42px]"><rect x="4" y="1" width="13" height="16" fill="none" stroke="#c8cbd0" strokeWidth="2" /><circle cx="28" cy="21" r="7" fill="none" stroke="#c8cbd0" strokeWidth="2" /><path d="M13 26l-9 16h18z" fill="none" stroke="#c8cbd0" strokeWidth="2" /></svg>
        </StatusDiv>
        <StatusDiv className="ml-[8px] w-[46px] bg-[#5887bf]">
          <svg viewBox="0 0 36 36" className="w-[34px] h-[34px]"><circle cx="18" cy="18" r="15" fill="none" stroke="#d5e6f6" strokeWidth="3" /><path d="M10 26L26 10" stroke="#d5e6f6" strokeWidth="4" /></svg>
        </StatusDiv>
        <StatusDiv className="ml-[8px] w-[58px] bg-[#3a404c] overflow-visible">
          <svg viewBox="0 0 50 60" className="w-[50px] h-[60px] -mt-[10px]"><path d="M2 2h46v44H2z" fill="#2f5aa0" /><path d="M2 20L22 2h10l16 20" fill="#8aa8cc" /><path d="M3 40h14v12H3z" fill="#e0a020" /><circle cx="16" cy="16" r="6" fill="none" stroke="#e8f0f8" strokeWidth="3" /><path d="M16 2v40M4 16h24" stroke="#e8f0f8" strokeWidth="2" /><path d="M20 46l8 10 20-22" fill="none" stroke="#4caf50" strokeWidth="6" /></svg>
        </StatusDiv>
        <StatusDiv className="ml-[4px] flex-1 bg-[#3a404c] gap-[14px] pr-[2px]">
          <svg viewBox="0 0 36 36" className="w-[34px] h-[36px]"><rect x="1" y="1" width="34" height="34" fill="none" stroke="#b0b3b8" strokeWidth="2" /><path d="M4 32l9-9M4 32v-7M4 32h7M32 4l-9 9M32 4v7M32 4h-7" stroke="#dfe1e3" strokeWidth="2" fill="none" /></svg>
          <svg viewBox="0 0 36 36" className="w-[34px] h-[36px]"><path d="M1 5h34M1 18h34M1 31h34" stroke="#e6e7e9" strokeWidth="6" /></svg>
        </StatusDiv>
      </div>
      {/* taskbar */}
      <div className="h-[98px] shrink-0 bg-[#bdeaea] flex items-center relative text-[#123344]">
        <svg viewBox="0 0 48 48" className="ml-[41px] w-[47px] h-[48px]"><defs><linearGradient id="win" x1="0" y1="0" x2="1" y2="1"><stop offset="0" stopColor="#35b4f5" /><stop offset="1" stopColor="#0a6fd0" /></linearGradient></defs><path d="M0 2a2 2 0 0 1 2-2h21v23H0zM25 0h21a2 2 0 0 1 2 2v21H25zM0 25h23v23H2a2 2 0 0 1-2-2zM25 25h23v21a2 2 0 0 1-2 2H25z" fill="url(#win)" /></svg>
        <svg viewBox="0 0 50 50" className="ml-[44px] w-[50px] h-[50px]"><circle cx="25" cy="25" r="25" fill="#0f74c8" /><path d="M2 20C6 6 18 0 28 0c12 0 22 9 22 23 0 8-7 12-14 10-6-1-9-4-9-8 0-6-4-9-9-9-8 0-14 5-16 12z" fill="#38b88c" /><path d="M22 30c0 9 8 14 16 11-4 5-10 9-16 8C12 47 8 38 11 30c2-5 6-9 11-8 2 1-1 4 0 8z" fill="#66c8f0" /></svg>
        <svg viewBox="0 0 48 48" className="ml-[40px] w-[48px] h-[48px]"><path d="M24 24L3 12A24 24 0 0 1 45 12H24z" fill="#d9483b" /><path d="M3 12A24 24 0 0 0 18 47l6-23z" fill="#2a9a50" /><path d="M45 12A24 24 0 0 1 18 47l6-23z" fill="#f4c230" /><circle cx="24" cy="24" r="11" fill="#fff" /><circle cx="24" cy="24" r="8.5" fill="#4a86e8" /></svg>
        <div className="ml-[42px] w-[45px] h-[46px] relative flex items-center justify-center">
          <div className="w-[45px] h-[46px] rounded-full bg-black border-[2px] border-white shadow-[0_0_0_1px_#333] flex items-center justify-center"><div className="w-[23px] h-[23px] rounded-full bg-[#e8391e]" /></div>
          <div className="absolute left-[16px] -bottom-[17px] w-[12px] h-[7px] rounded-full bg-[#6f8f98]" />
        </div>
        <div className="ml-[29px] w-[69px] h-[77px] rounded-[4px] bg-[#d9f3f3] relative flex justify-center pt-[15px]">
          <div className="w-[44px] h-[50px] bg-[#d8203f] rounded-[3px] relative flex flex-col items-center justify-between text-white font-bold">
            <span className="text-[28px] leading-[30px] font-['Liberation_Sans',sans-serif]">A</span>
            <span className="w-full h-[20px] bg-[#7c1226] text-center text-[12px] leading-[20px]">CAD</span>
          </div>
          <div className="absolute left-[21px] bottom-[1px] w-[31px] h-[7px] rounded-[3px] bg-[#2f8092]" />
        </div>
        <svg viewBox="0 0 22 12" className="ml-[2383px] w-[22px] h-[12px]"><path d="M1 11L11 1l10 10" fill="none" stroke="#123344" strokeWidth="2.4" /></svg>
        <svg viewBox="0 0 22 36" className="ml-[108px] w-[22px] h-[36px]"><rect x="6" y="0" width="10" height="22" rx="5" fill="none" stroke="#1f6a80" strokeWidth="2" /><path d="M1 14c0 14 20 14 20 0M11 27v9" fill="none" stroke="#1f6a80" strokeWidth="2" /></svg>
        <span className="ml-[37px] text-[30px] leading-none">英</span>
        <svg viewBox="0 0 34 30" className="ml-[35px] w-[34px] h-[30px]"><path d="M2 10a22 22 0 0 1 30 0M7 16a15 15 0 0 1 20 0M12 21a8 8 0 0 1 10 0" fill="none" stroke="#123344" strokeWidth="3" /><circle cx="17" cy="26" r="3" fill="#123344" /></svg>
        <svg viewBox="0 0 30 30" className="ml-[17px] w-[28px] h-[30px]"><path d="M2 10h5l8-7v24l-8-7H2z" fill="none" stroke="#123344" strokeWidth="2" /><path d="M19 10a7 7 0 0 1 0 10M23 6a12 12 0 0 1 0 18" fill="none" stroke="#123344" strokeWidth="2" /></svg>
        <svg viewBox="0 0 34 30" className="ml-[18px] w-[32px] h-[30px]"><rect x="2" y="8" width="27" height="18" rx="3" fill="#123344" /><rect x="29" y="13" width="4" height="8" fill="#123344" /><path d="M13 0l-5 14h8l-3 12" fill="none" stroke="#bdeaea" strokeWidth="2" /></svg>
        <div className="ml-[21px] w-[125px] flex flex-col items-end text-[24px] leading-[33px] text-[#2a4450] font-['Noto_Sans',sans-serif]">
          <span>21:36</span><span>2024/10/9</span>
        </div>
        <svg viewBox="0 0 28 40" className="ml-[19px] w-[26px] h-[40px]"><path d="M14 0c8 0 11 7 11 14v12l3 4H0l3-4V14C3 7 6 0 14 0z" fill="#123d55" /><path d="M9 34h10l-5 6z" fill="#123d55" /></svg>
      </div>
    </div>
  );
}
